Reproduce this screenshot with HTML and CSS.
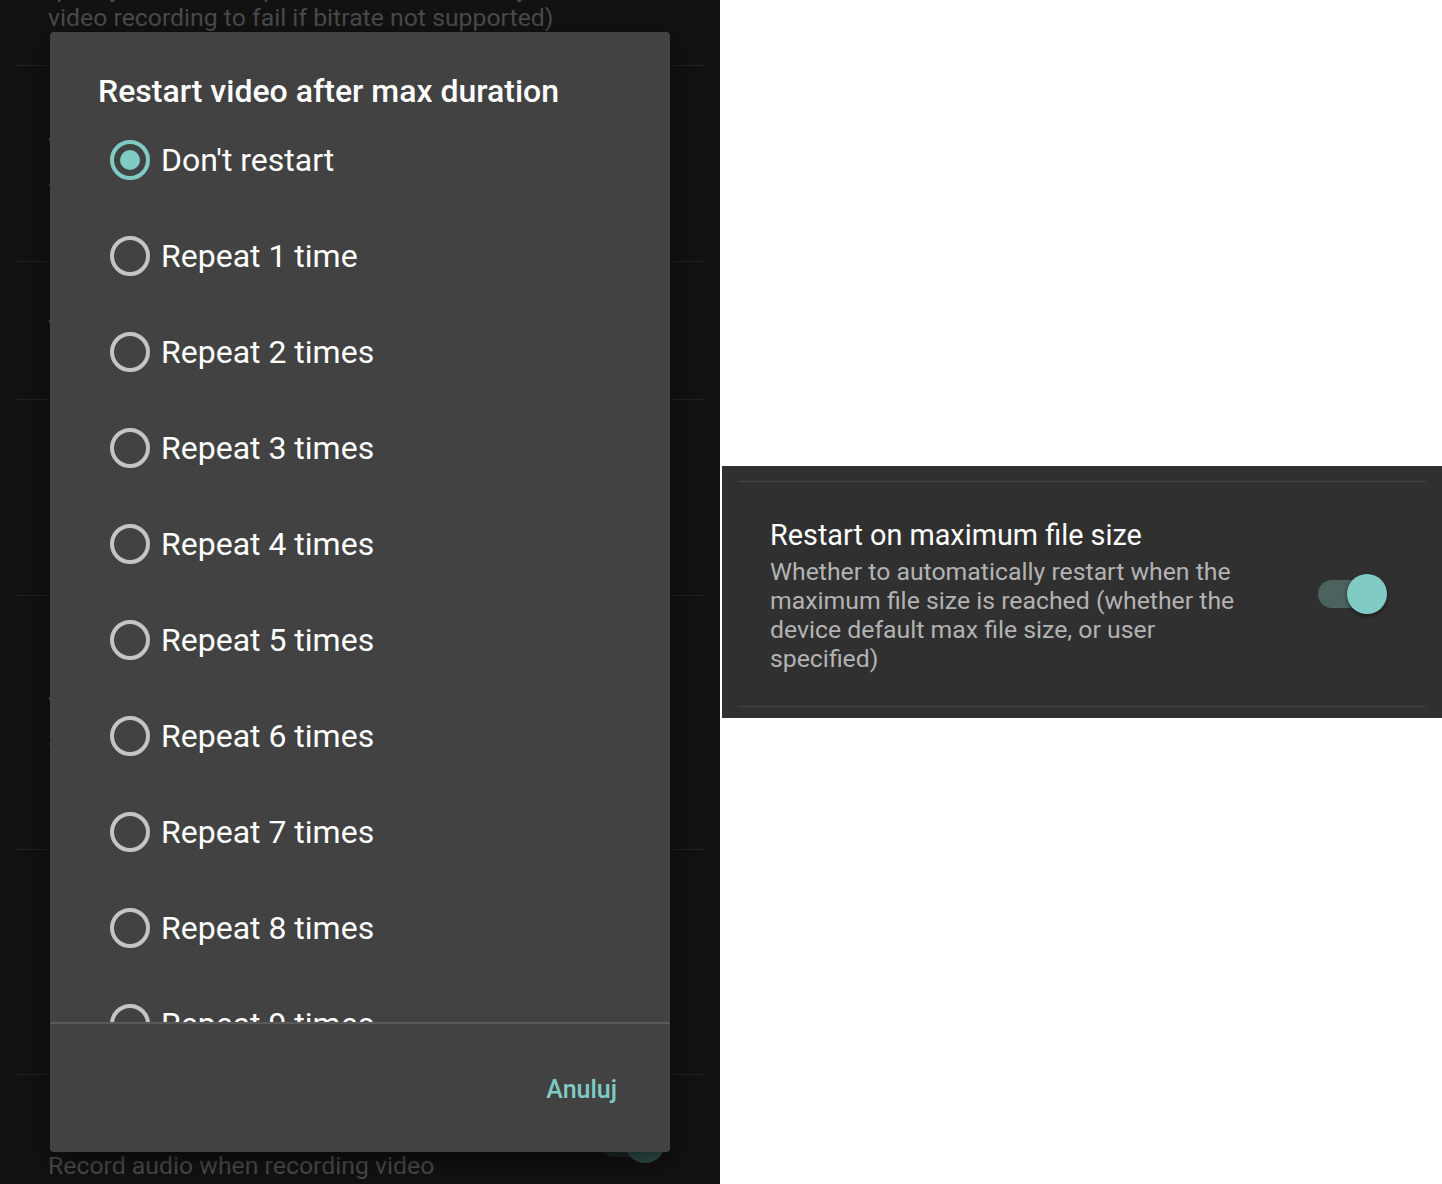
FILE: index.html
```html
<!DOCTYPE html>
<html lang="en">
<head>
<meta charset="utf-8">
<title>Restart video after max duration</title>
<link rel="stylesheet" href="styles.css">
</head>
<body>
<div class="page">
  <section class="left">
    <div class="bg-list">
      <div class="pref pref-1">
        <p class="pref-desc">quality, but it will depend on the device, may cause<br>video recording to fail if bitrate not supported)</p>
      </div>
      <div class="pref pref-2">
        <p class="pref-title">Video frame rate</p>
        <p class="pref-desc">Set the frame rate of the video</p>
      </div>
      <div class="pref pref-3">
        <p class="pref-title">Video max duration</p>
      </div>
      <div class="pref pref-4">
        <p class="pref-title">Restart video</p>
        <p class="pref-desc">Number of times to restart</p>
      </div>
      <div class="pref pref-5">
        <p class="pref-title">Video max file size</p>
        <p class="pref-desc">Set a maximum file size</p>
      </div>
      <div class="pref pref-6">
        <p class="pref-title">Record audio</p>
      </div>
      <div class="pref pref-7">
        <div class="pref-text">
          <p class="pref-title">Record audio</p>
          <p class="pref-desc">Record audio when recording video</p>
        </div>
        <div class="bg-switch"><span class="bg-track"></span><span class="bg-thumb"></span></div>
      </div>
    </div>

    <div class="dialog">
      <h2 class="dialog-title">Restart video after max duration</h2>
      <ul class="choices">
        <li class="choice selected"><span class="radio"></span><span class="label">Don't restart</span></li>
        <li class="choice"><span class="radio"></span><span class="label">Repeat 1 time</span></li>
        <li class="choice"><span class="radio"></span><span class="label">Repeat 2 times</span></li>
        <li class="choice"><span class="radio"></span><span class="label">Repeat 3 times</span></li>
        <li class="choice"><span class="radio"></span><span class="label">Repeat 4 times</span></li>
        <li class="choice"><span class="radio"></span><span class="label">Repeat 5 times</span></li>
        <li class="choice"><span class="radio"></span><span class="label">Repeat 6 times</span></li>
        <li class="choice"><span class="radio"></span><span class="label">Repeat 7 times</span></li>
        <li class="choice"><span class="radio"></span><span class="label">Repeat 8 times</span></li>
        <li class="choice"><span class="radio"></span><span class="label">Repeat 9 times</span></li>
        <li class="choice"><span class="radio"></span><span class="label">Repeat 10 times</span></li>
      </ul>
      <div class="dialog-footer">
        <button class="btn-text">Anuluj</button>
      </div>
    </div>
  </section>

  <section class="right">
    <div class="card">
      <div class="setting">
        <div class="setting-text">
          <p class="setting-title">Restart on maximum file size</p>
          <p class="setting-desc">Whether to automatically restart when the maximum file size is reached (whether the device default max file size, or user specified)</p>
        </div>
        <div class="switch"><span class="track"></span><span class="thumb"></span></div>
      </div>
    </div>
  </section>
</div>
</body>
</html>
```

FILE: styles.css
```css
* { box-sizing: border-box; }

html, body {
  margin: 0;
  padding: 0;
  background: #ffffff;
  font-family: Roboto, "Noto Sans", "Liberation Sans", sans-serif;
}

p, h2, ul { margin: 0; padding: 0; }

.page {
  display: flex;
  width: 1442px;
  height: 1184px;
}

/* ---------- left: dimmed settings with dialog ---------- */
.left {
  position: relative;
  width: 720px;
  height: 1184px;
  background: #121212;
  overflow: hidden;
  flex: none;
}

.bg-list {
  display: flex;
  flex-direction: column;
}

.pref {
  margin: 0 16px;
  padding-left: 32px;
  border-bottom: 1px solid #212121;
  display: flex;
  flex-direction: column;
  justify-content: center;
  color: #4a4a4a;
  flex: none;
}

.pref-title { font-size: 28.8px; line-height: 34px; color: #555555; }
.pref-desc { font-size: 24.8px; line-height: 29px; color: #4a4a4a; }

.pref-1 { height: 66px; justify-content: flex-end; padding-bottom: 33px; }
.pref-2 { height: 196px; }
.pref-3 { height: 138px; }
.pref-4 { height: 196px; }
.pref-5 { height: 254px; }
.pref-6 { height: 225px; }
.pref-7 {
  height: 180px;
  border-bottom: none;
  flex-direction: row;
  align-items: flex-start;
  justify-content: space-between;
  padding-top: 42px;
}
.pref-7 .pref-text { display: flex; flex-direction: column; }

.bg-switch {
  position: relative;
  width: 65px;
  height: 40px;
  margin-right: 39px;
  margin-top: 6px;
}
.bg-track {
  position: absolute;
  left: 0; top: 6px;
  width: 60px; height: 28px;
  border-radius: 14px;
  background: #1d2827;
}
.bg-thumb {
  position: absolute;
  right: 0; top: 0;
  width: 40px; height: 40px;
  border-radius: 50%;
  background: #2f4f4c;
}

.dialog {
  position: absolute;
  left: 50px;
  top: 32px;
  width: 620px;
  height: 1120px;
  background: #424242;
  border-radius: 4px;
  box-shadow: 0 8px 24px rgba(0, 0, 0, 0.5);
  display: flex;
  flex-direction: column;
  overflow: hidden;
}

.dialog-title {
  height: 80px;
  padding: 39px 0 0 48px;
  font-size: 32px;
  line-height: 40px;
  font-weight: 500;
  color: #ffffff;
  flex: none;
}

.choices {
  list-style: none;
  flex: 1;
  overflow: hidden;
}

.choice {
  height: 96px;
  display: flex;
  align-items: center;
  padding-left: 60px;
}

.radio {
  width: 40px;
  height: 40px;
  border-radius: 50%;
  border: 4px solid #c4c4c4;
  flex: none;
  display: flex;
  align-items: center;
  justify-content: center;
}

.choice.selected .radio { border-color: #80cbc4; }
.choice.selected .radio::after {
  content: "";
  width: 20px;
  height: 20px;
  border-radius: 50%;
  background: #80cbc4;
}

.label {
  margin-left: 11px;
  font-size: 32px;
  line-height: 40px;
  color: #ffffff;
}

.dialog-footer {
  height: 130px;
  border-top: 2px solid #5a5a5a;
  display: flex;
  justify-content: flex-end;
  align-items: center;
  padding: 4px 53px 0 0;
  flex: none;
}

.btn-text {
  background: none;
  border: none;
  padding: 0;
  font-family: inherit;
  font-size: 25px;
  line-height: 32px;
  font-weight: 500;
  color: #80cbc4;
}

/* ---------- right: single setting card ---------- */
.right {
  width: 722px;
  flex: none;
  padding: 466px 0 0 2px;
}

.card {
  width: 720px;
  height: 252px;
  background: #303030;
  padding: 15px 16px 11px;
}

.setting {
  height: 226px;
  border-top: 1px solid #444444;
  border-bottom: 1px solid #444444;
  display: flex;
  align-items: center;
  justify-content: space-between;
  padding-left: 32px;
  padding-right: 39px;
  padding-top: 3px;
}

.setting-text { width: 490px; }

.setting-title {
  font-size: 28.8px;
  line-height: 34px;
  color: #ffffff;
  margin-bottom: 5px;
}

.setting-desc {
  font-size: 24.8px;
  line-height: 29px;
  color: #b3b3b3;
}

.switch {
  position: relative;
  width: 69px;
  height: 40px;
  flex: none;
  margin-top: -3px;
}
.track {
  position: absolute;
  left: 0; top: 6px;
  width: 64px; height: 28px;
  border-radius: 14px;
  background: #4b625f;
}
.thumb {
  position: absolute;
  right: 0; top: 0;
  width: 40px; height: 40px;
  border-radius: 50%;
  background: #80cbc4;
  box-shadow: 0 2px 4px rgba(0, 0, 0, 0.45);
}
```
